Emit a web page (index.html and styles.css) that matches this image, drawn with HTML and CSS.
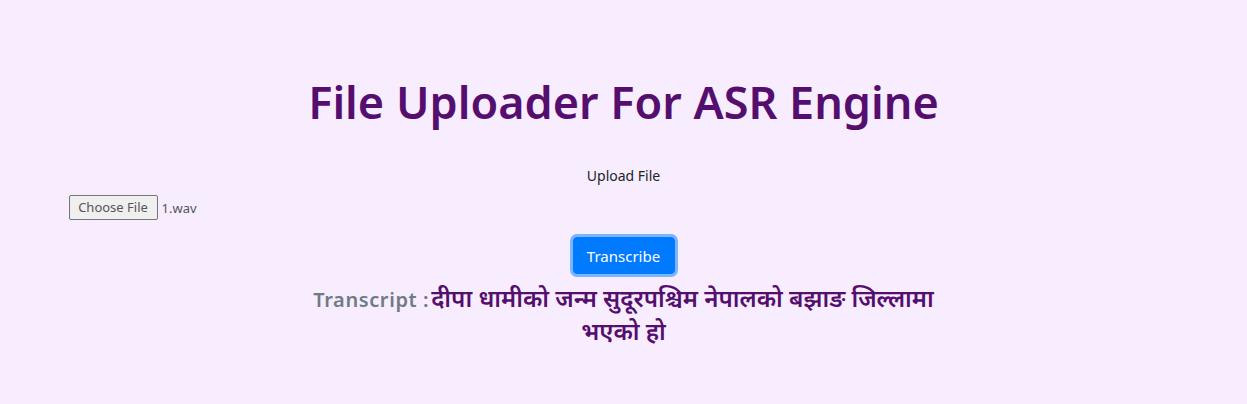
FILE: index.html
```html
<!DOCTYPE html>
<html>
<head>
<meta charset="utf-8">
<link rel="stylesheet" href="styles.css">
</head>
<body>
<div class="container">
  <h1 class="title">File Uploader For ASR Engine</h1>
  <form class="upload-form">
    <label class="upload-label">Upload File</label>
    <div class="file-row">
      <span class="file-btn">Choose File</span><span class="file-name">1.wav</span>
    </div>
    <div class="btn-row">
      <button type="button" class="btn-transcribe">Transcribe</button>
    </div>
  </form>
  <div class="transcript">
    <span class="transcript-label">Transcript :</span><span class="transcript-text">दीपा धामीको जन्म सुदूरपश्चिम नेपालको बझाङ जिल्लामा भएको हो</span>
  </div>
</div>
</body>
</html>
```
FILE: styles.css
```css
html, body {
  margin: 0;
  padding: 0;
  background: #f7edfe;
}
body {
  font-family: "Noto Sans", "Open Sans", sans-serif;
  color: #212529;
}
.container {
  max-width: 1110px;
  margin: 0 auto;
  padding: 0 15px;
}
.title {
  margin: 77px 0 0;
  text-align: center;
  font-size: 45px;
  font-weight: 600;
  color: #560e6e;
  line-height: 50px;
}
.upload-form {
  margin-top: 39px;
  display: flex;
  flex-direction: column;
}
.upload-label {
  text-align: center;
  font-size: 14px;
  line-height: 20px;
  color: #212529;
}
.file-row {
  margin-top: 9px;
  display: flex;
  align-items: center;
  font-size: 13px;
}
.file-btn {
  display: inline-block;
  box-sizing: border-box;
  width: 89px;
  text-align: center;
  height: 25px;
  line-height: 23px;
  border: 1px solid #767676;
  border-radius: 2px;
  background: #efefef;
  color: #555;
  font-size: 13px;
}
.file-name {
  margin-left: 4px;
  color: #555;
}
.btn-row {
  margin-top: 17px;
  display: flex;
  justify-content: center;
}
.btn-transcribe {
  font-family: inherit;
  font-size: 15px;
  color: #fff;
  background: #007bff;
  border: 1px solid #007bff;
  border-radius: 4px;
  padding: 0 12px;
  width: 102px;
  height: 37px;
  box-shadow: 0 0 0 3px rgba(0, 123, 255, 0.5);
}
.transcript {
  margin: 9px auto 0;
  max-width: 640px;
  text-align: center;
  line-height: 33px;
}
.transcript-label {
  font-size: 20px;
  font-weight: 600;
  letter-spacing: 0.6px;
  color: #707a85;
  margin-right: 2px;
}
.transcript-text {
  font-family: "Noto Sans Devanagari", "Lohit Devanagari", "Noto Sans", sans-serif;
  font-size: 24px;
  font-weight: 600;
  color: #560e6e;
}
```
